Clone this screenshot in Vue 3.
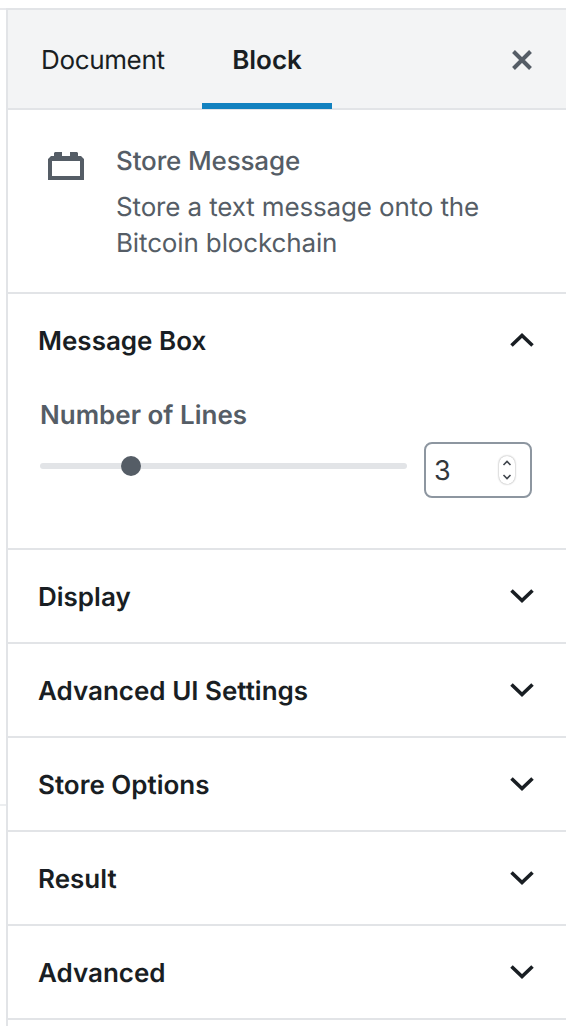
<script setup>
const closedPanels = ['Display', 'Advanced UI Settings', 'Store Options', 'Result', 'Advanced']
</script>

<template>
  <div class="page">
    <div class="gutter"><div class="gutter-line"></div></div>
    <aside class="sidebar">
      <header class="tabs">
        <button class="tab">Document</button>
        <button class="tab active">Block</button>
        <svg class="close" viewBox="0 0 20 20" width="20" height="20">
          <path d="M1.500 1.500L18.500 18.500M18.500 1.500L1.500 18.500" fill="none" stroke="#555d66" stroke-width="4" />
        </svg>
      </header>
      <section class="card">
        <svg class="block-icon" viewBox="0 0 18 14" width="36" height="28">
          <path d="M3 2V.5L3.500 0H7V2h4V0h3.500L15 .5V2h1.500L18 3.500V14H0V3.500L1.500 2z M2 4.500V12h14V4.500z" fill="#555d66" fill-rule="evenodd" />
        </svg>
        <div class="card-text">
          <div class="card-title">Store Message</div>
          <div class="card-desc">Store a text message onto the Bitcoin blockchain</div>
        </div>
      </section>
      <section class="panel open">
        <div class="panel-head">
          <span>Message Box</span>
          <svg class="chevron" viewBox="0 0 24 14" width="24" height="14">
            <path d="M1.500 12.500L12 2.500L22.500 12.500" fill="none" stroke="#191e23" stroke-width="3.600" />
          </svg>
        </div>
        <div class="field">
          <label class="field-label">Number of Lines</label>
          <div class="range-row">
            <div class="track"><div class="thumb"></div></div>
            <div class="number">
              <span>3</span>
              <div class="spinner">
                <svg viewBox="0 0 10 26" width="10" height="26">
                  <path d="M1.500 8L5 4.500L8.500 8M1.500 18L5 21.500L8.500 18" fill="none" stroke="#40464d" stroke-width="1.600" />
                </svg>
              </div>
            </div>
          </div>
        </div>
      </section>
      <section v-for="name in closedPanels" :key="name" class="panel">
        <div class="panel-head">
          <span>{{ name }}</span>
          <svg class="chevron" viewBox="0 0 24 14" width="24" height="14">
            <path d="M1.500 1.500L12 11.500L22.500 1.500" fill="none" stroke="#191e23" stroke-width="3.600" />
          </svg>
        </div>
      </section>
    </aside>
  </div>
</template>

<style scoped>
.page {
  display: flex;
  width: 566px;
  height: 1026px;
  padding-top: 8px;
  box-sizing: border-box;
  overflow: hidden;
  background: #fff;
  font-family: Inter, "Liberation Sans", sans-serif;
  text-rendering: geometricPrecision;
  color: #191e23;
}
.gutter {
  position: relative;
  width: 6px;
  flex: none;
  border-top: 2px solid #e8e9ec;
}
.gutter-line {
  position: absolute;
  left: 0;
  top: 794px;
  width: 6px;
  height: 2px;
  background: #eceef0;
}
.sidebar {
  flex: 1;
  border-top: 2px solid #e2e4e7;
  border-left: 2px solid #e2e4e7;
}
.tabs {
  display: flex;
  align-items: stretch;
  height: 100px;
  box-sizing: border-box;
  background: #f3f4f5;
  border-bottom: 2px solid #e2e4e7;
}
.tab {
  border: 0;
  background: none;
  padding: 0;
  font: 400 26px Inter, "Liberation Sans", sans-serif;
  text-rendering: geometricPrecision;
  color: #191e23;
  height: 99px;
  box-sizing: border-box;
}
.tab:first-child {
  margin-left: 33px;
  margin-right: 38px;
  width: 123px;
  padding-top: 2px;
  letter-spacing: -0.35px;
  white-space: nowrap;
}
.tab.active {
  width: 130px;
  font-weight: 600;
  border-bottom: 6px solid #1281bf;
  padding-top: 8px;
}
.close {
  align-self: flex-start;
  margin: 40px 34px 0 auto;
}
.card {
  display: flex;
  height: 184px;
  box-sizing: border-box;
  padding: 42px 30px 0 40px;
  border-bottom: 2px solid #e2e4e7;
}
.block-icon {
  flex: none;
}
.card-text {
  margin-left: 32px;
  margin-top: -8px;
  color: #555d66;
}
.card-title {
  font-size: 26px;
  font-weight: 500;
  line-height: 36px;
  margin-bottom: 10px;
  letter-spacing: -0.15px;
}
.card-desc {
  font-size: 26px;
  line-height: 36px;
  letter-spacing: -0.14px;
}
.panel {
  height: 94px;
  box-sizing: border-box;
  border-bottom: 2px solid #e2e4e7;
}
.panel.open {
  height: 256px;
}
.panel-head {
  display: flex;
  justify-content: space-between;
  align-items: center;
  height: 92px;
  box-sizing: border-box;
  padding: 2px 32px 0 30px;
  font-size: 26px;
  font-weight: 600;
}
.chevron {
  margin-bottom: 2px;
}
.field {
  padding: 0 34px 0 32px;
}
.field-label {
  display: block;
  font-size: 26px;
  font-weight: 600;
  line-height: 36px;
  color: #555d66;
  margin-top: 12px;
}
.range-row {
  display: flex;
  align-items: center;
  margin-top: 8px;
}
.track {
  position: relative;
  flex: none;
  width: 367px;
  height: 6px;
  margin-bottom: 8px;
  border-radius: 3px;
  background: #e2e4e7;
}
.thumb {
  position: absolute;
  left: 81px;
  top: -7px;
  width: 20px;
  height: 20px;
  border-radius: 50%;
  background: #555d66;
}
.number {
  display: flex;
  align-items: center;
  justify-content: space-between;
  width: 108px;
  height: 56px;
  margin-left: 17px;
  padding: 0 15px 0 8px;
  box-sizing: border-box;
  border: 2px solid #8d96a0;
  border-radius: 8px;
  font-size: 27px;
  color: #32373c;
}
.spinner {
  display: flex;
  width: 16px;
  height: 28px;
  align-items: center;
  justify-content: center;
  border-radius: 8px;
  background: #fff;
  box-shadow: 0 0 2px rgba(0, 0, 0, 0.45);
}
</style>
